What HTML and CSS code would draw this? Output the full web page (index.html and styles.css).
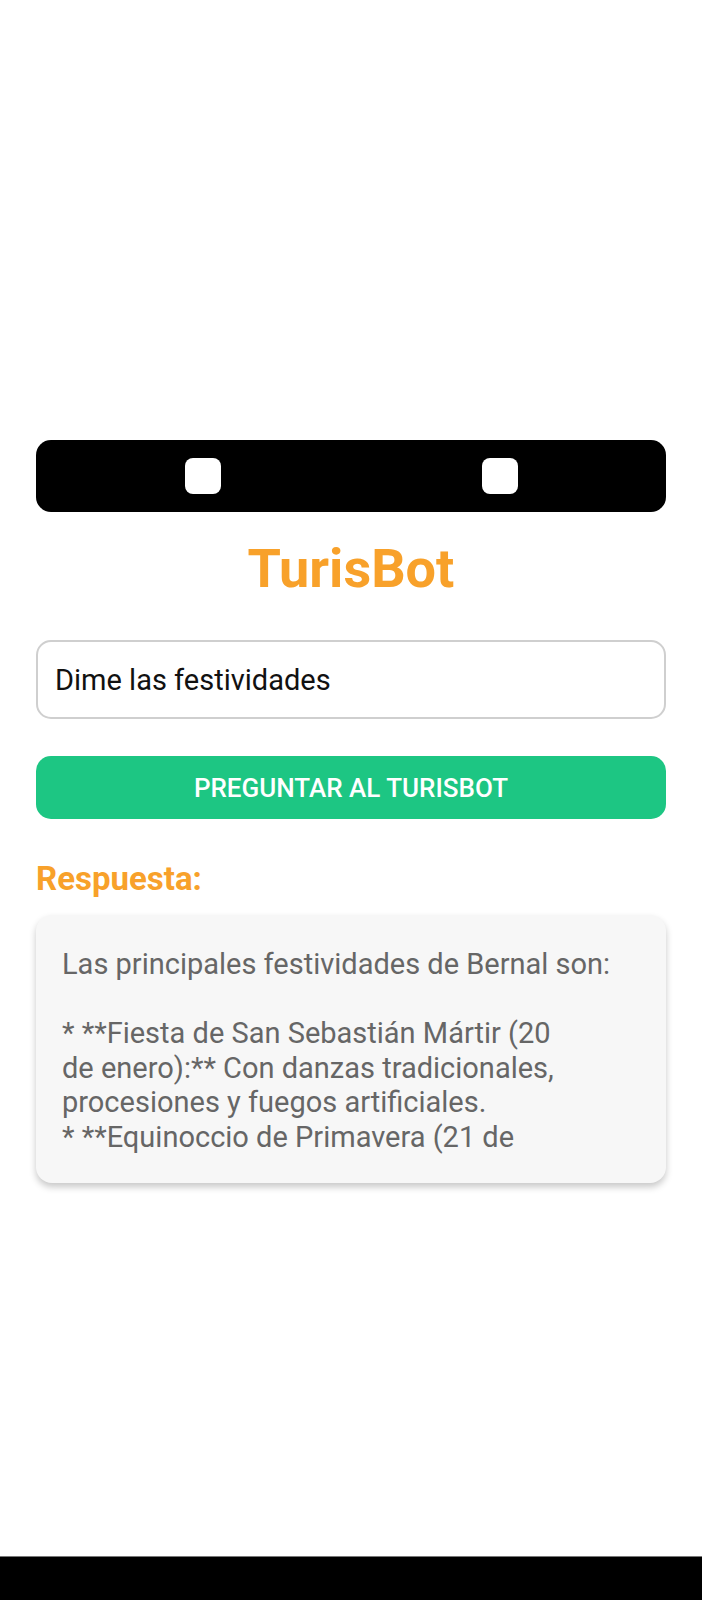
FILE: index.html
```
<!DOCTYPE html>
<html lang="es">
<head>
<meta charset="utf-8" />
<link rel="stylesheet" href="styles.css">
<title>TurisBot</title>
</head>
<body>
  <div class="screen">
    <div class="content">
      <div class="cover">
        <span class="dot"></span>
        <span class="dot"></span>
      </div>
      <h1 class="title">TurisBot</h1>
      <div class="ask">Dime las festividades</div>
      <div class="btn">PREGUNTAR AL TURISBOT</div>
      <h2 class="label">Respuesta:</h2>
      <div class="answer">
        <div class="answer-text">Las principales festividades de Bernal son:<br /><br />* **Fiesta de San Sebastián Mártir (20<br />de enero):** Con danzas tradicionales,<br />procesiones y fuegos artificiales.<br />* **Equinoccio de Primavera (21 de</div>
      </div>
    </div>
    <div class="navbar"></div>
  </div>
</body>
</html>
```

FILE: styles.css
```
*{margin:0;padding:0;box-sizing:border-box;}
body{background:#fff;font-family:Roboto,"Noto Sans",sans-serif;}
.screen{height:1600px;display:flex;flex-direction:column;}
.content{flex:1;padding:440px 36px 0 36px;}
/* imagen de cabecera */
.cover{height:72px;background:#000;border-radius:15px;display:flex;justify-content:center;align-items:center;gap:261px;}
.cover .dot{width:36px;height:36px;background:#fff;border-radius:8px;}
.title{margin-top:25px;font-size:54px;font-weight:700;color:#f8a12a;text-align:center;line-height:63px;}
.ask{margin-top:40px;height:79px;border:2px solid #cfcfcf;border-radius:15px;padding-left:17px;display:flex;align-items:center;font-size:29px;color:#111;}
.btn{margin-top:37px;height:63px;background:#1dc683;border-radius:15px;display:flex;justify-content:center;align-items:center;font-size:26px;font-weight:500;color:#fff;}
.label{margin-top:41px;font-size:33px;font-weight:700;color:#f8a12a;line-height:38px;}
.answer{margin-top:17px;height:268px;background:#f7f7f7;border-radius:16px;padding:32px 26px 0 26px;box-shadow:0 4px 7px rgba(0,0,0,0.22);}
.answer-text{height:207px;overflow:hidden;font-size:29px;line-height:34.5px;color:#666;}
.navbar{height:44px;background:#000;border-top:1px solid #777;}
```
